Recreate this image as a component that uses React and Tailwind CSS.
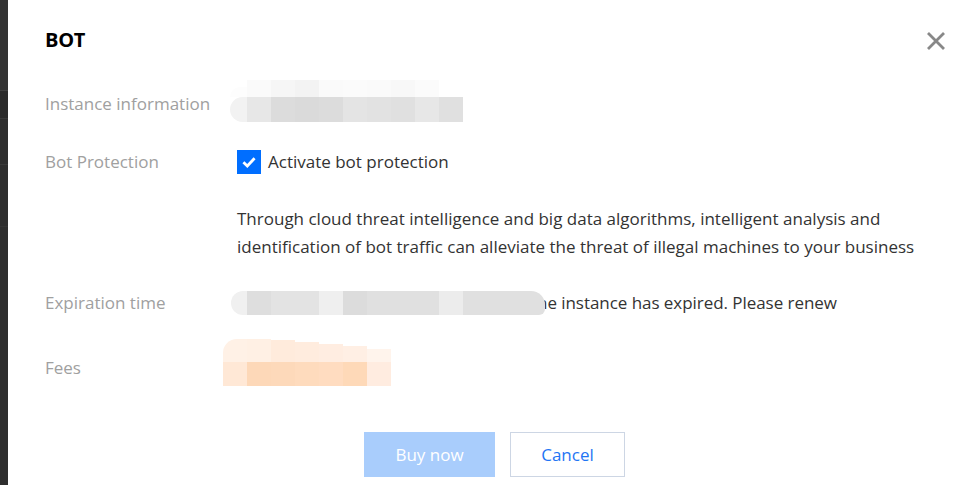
import React from 'react';

// mosaic blocks standing in for redacted values
const instanceTop = ['#fdfdfd', '#fafafa', '#f6f6f6', '#f3f3f3', '#fafafa', '#fbfbfb', '#fafafa', '#f8f8f8', '#fbfbfb', '#ffffff'];
const instanceRow = ['#f2f2f2', '#e7e7e7', '#dcdcdc', '#dadada', '#dcdcdc', '#e4e4e4', '#e2e2e2', '#e0e0e0', '#e7e7e7', '#e0e0e0'];
const expireRow = ['#f0f0f0', '#dedede', '#e3e3e3', '#e3e3e3', '#efefef', '#dcdcdc', '#e0e0e0', '#e0e0e0', '#e0e0e0', '#ececec', '#e0e0e0', '#e0e0e0', '#e0e0e0'];
const feeTop = [
  { c: '#fff1e6', h: 'h-[23px]' },
  { c: '#fff0e4', h: 'h-[23px]' },
  { c: '#ffebdc', h: 'h-[22px]' },
  { c: '#ffecde', h: 'h-[20px]' },
  { c: '#ffede1', h: 'h-[18px]' },
  { c: '#ffefe4', h: 'h-[16px]' },
  { c: '#fff4ec', h: 'h-[13px]' },
];
const feeRow = ['#ffe8d6', '#fdd8b8', '#fdd9ba', '#fedbbd', '#ffdcc0', '#fed9b8', '#ffece0'];

const Label = ({ children, className = '' }) => (
  <div className={`w-[192px] shrink-0 text-[17px] leading-6 text-[#a0a0a0] ${className}`}>{children}</div>
);

const App = () => {
  return (
    <div className="flex w-[979px] h-[485px] overflow-hidden font-['Open_Sans',sans-serif]">
      <div className="w-2 shrink-0 flex flex-col bg-[#2e2e2e]">
        <div className="h-[90px] bg-[#333333]" />
        <div className="h-[28px] border-t border-[#404040] bg-[#2b2b2b]" />
        <div className="h-[46px] border-t border-[#3a3a3a]" />
        <div className="h-[62px] border-t border-[#3a3a3a]" />
        <div className="flex-1 border-t border-[#353535]" />
      </div>

      <div className="flex-1 bg-white flex flex-col pl-[37px] pr-[33px] text-[#333333]">
        <div className="flex items-center justify-between pt-[28px] h-[52px]">
          <h2 className="text-[20px] leading-6 font-bold text-black tracking-[-0.3px]">BOT</h2>
          <svg width="20" height="20" viewBox="0 0 20 20" className="mt-[2px]">
            <path d="M2 2 L18 18 M18 2 L2 18" stroke="#888888" strokeWidth="2.8" />
          </svg>
        </div>

        <div className="flex mt-[28px] h-[42px]">
          <Label className="pt-[12px]">Instance information</Label>
          <div className="-ml-[7px] flex flex-col">
            <div className="flex h-[17px] items-end">
              {instanceTop.map((c, i) => (
                <div key={i} className={`${i === 0 ? 'w-[17px] h-[10px] rounded-tl-[12px]' : i === 9 ? 'w-6 h-[8px] rounded-tr-[20px]' : 'w-6 h-[17px]'}`} style={{ backgroundColor: c }} />
              ))}
            </div>
            <div className="flex h-[25px]">
              {instanceRow.map((c, i) => (
                <div key={i} className={`h-full ${i === 0 ? 'w-[17px] rounded-l-full' : 'w-6'}`} style={{ backgroundColor: c }} />
              ))}
            </div>
          </div>
        </div>

        <div className="flex mt-[28px] h-6 items-center">
          <Label>Bot Protection</Label>
          <label className="flex items-center">
            <span className="w-6 h-6 bg-[#006eff] flex items-center justify-center">
              <svg width="16" height="16" viewBox="0 0 16 16">
                <path d="M2.4 8.2 L6.3 11.9 L13.6 4.2" fill="none" stroke="white" strokeWidth="2.8" />
              </svg>
            </span>
            <span className="ml-[7px] text-[17px] leading-6 text-[#333]">Activate bot protection</span>
          </label>
        </div>

        <div className="flex mt-[31px]">
          <Label />
          <p className="text-[17px] leading-[28px] text-[#333] w-[700px]">
            Through cloud threat intelligence and big data algorithms, intelligent analysis and identification of bot traffic can alleviate the threat of illegal machines to your business
          </p>
        </div>

        <div className="flex mt-[29px] h-[25px] items-center">
          <Label>Expiration time</Label>
          <div className="-ml-[6px] flex h-6 relative z-10">
            {expireRow.map((c, i) => (
              <div key={i} className={`h-full ${i === 0 ? 'w-4 rounded-l-full' : i === 12 ? 'w-[34px] rounded-br-[6px] rounded-tr-[14px]' : 'w-6'}`} style={{ backgroundColor: c }} />
            ))}
          </div>
          <span className="-ml-[8px] text-[17px] leading-6 text-[#333] tracking-[-0.05px]">ne instance has expired. Please renew</span>
        </div>

        <div className="flex mt-[24px] h-[47px]">
          <Label className="pt-[17px]">Fees</Label>
          <div className="-ml-[14px] flex flex-col">
            <div className="flex h-[23px] items-end">
              {feeTop.map((b, i) => (
                <div key={i} className={`w-6 ${b.h} ${i === 0 ? 'rounded-tl-[14px]' : ''}`} style={{ backgroundColor: b.c }} />
              ))}
            </div>
            <div className="flex h-[24px]">
              {feeRow.map((c, i) => (
                <div key={i} className="w-6 h-full" style={{ backgroundColor: c }} />
              ))}
            </div>
          </div>
        </div>

        <div className="flex justify-center gap-[15px] mt-[46px] -ml-[35px] -mr-[33px]">
          <button className="w-[131px] h-[45px] bg-[#a9cdfc] text-white text-[17px]">Buy now</button>
          <button className="w-[115px] h-[45px] border border-[#cdd6e4] bg-white text-[#1f75f4] text-[17px]">Cancel</button>
        </div>
      </div>
    </div>
  );
};

export default App;
